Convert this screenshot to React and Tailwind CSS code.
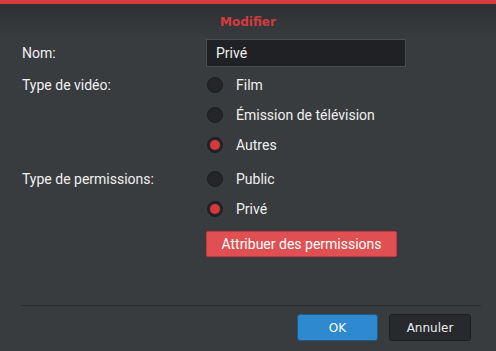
import React, { useState } from "react";

const Radio = ({ label, checked, onClick }) => (
  <button
    type="button"
    onClick={onClick}
    className="flex items-center h-[30px] text-left"
  >
    <span className="w-4 h-4 rounded-full bg-[#232528] border border-[#1c1d20] flex items-center justify-center">
      {checked && <span className="w-[10px] h-[10px] rounded-full bg-[#d8393d]" />}
    </span>
    <span className="ml-[13px] text-[14px] text-[#f0f0f0]">{label}</span>
  </button>
);

const App = () => {
  const [videoType, setVideoType] = useState("autres");
  const [perm, setPerm] = useState("prive");

  return (
    <div className="w-[496px] h-[351px] bg-[#393c3f] font-['Roboto',sans-serif] overflow-hidden flex flex-col">
      {/* Header */}
      <div className="h-1 bg-[#d63c3f]" />
      <div className="h-[33px] pt-[2px] flex items-center justify-center bg-gradient-to-b from-[#2e3034] to-[#383b3e]">
        <span className="font-['DejaVu_Sans',sans-serif] font-bold text-[12px] text-[#d63a3e]">
          Modifier
        </span>
      </div>

      {/* Body */}
      <div className="pl-[22px] pt-[2px] grid grid-cols-[184px_1fr] text-[14px] text-[#f0f0f0]">
        <div className="h-[28px] flex items-center">Nom:</div>
        <div>
          <input
            defaultValue="Privé"
            className="w-[200px] h-[28px] bg-[#1f2124] border border-[#4a4d51] px-[9px] text-[14px] text-[#f0f0f0] outline-none"
          />
        </div>

        <div className="mt-[3px] h-[30px] flex items-center">Type de vidéo:</div>
        <div className="mt-[3px] flex flex-col pl-px">
          <Radio label="Film" checked={videoType === "film"} onClick={() => setVideoType("film")} />
          <Radio label="Émission de télévision" checked={videoType === "tv"} onClick={() => setVideoType("tv")} />
          <Radio label="Autres" checked={videoType === "autres"} onClick={() => setVideoType("autres")} />
        </div>

        <div className="mt-1 h-[30px] flex items-center">Type de permissions:</div>
        <div className="mt-1 flex flex-col pl-px">
          <Radio label="Public" checked={perm === "public"} onClick={() => setPerm("public")} />
          <Radio label="Privé" checked={perm === "prive"} onClick={() => setPerm("prive")} />
          <button className="mt-[7px] w-[191px] h-[26px] -ml-px rounded-[2px] bg-[#e05052] border border-[#c23a3d] text-[14px] text-white">
            Attribuer des permissions
          </button>
        </div>
      </div>

      {/* Footer */}
      <div className="mt-[48px] ml-[21px] mr-[15px] border-t border-[#2a2c2f]" />
      <div className="mt-2 flex justify-end gap-[11px] pr-[25px] font-['DejaVu_Sans',sans-serif] text-[12px]">
        <button className="w-[81px] h-[27px] rounded-[3px] bg-[#2e89cf] border border-[#1f5b8a] text-white">
          OK
        </button>
        <button className="w-[82px] h-[27px] rounded-[3px] bg-[#27292c] border border-[#1c1d20] text-[#ececec]">
          Annuler
        </button>
      </div>
    </div>
  );
};

export default App;
